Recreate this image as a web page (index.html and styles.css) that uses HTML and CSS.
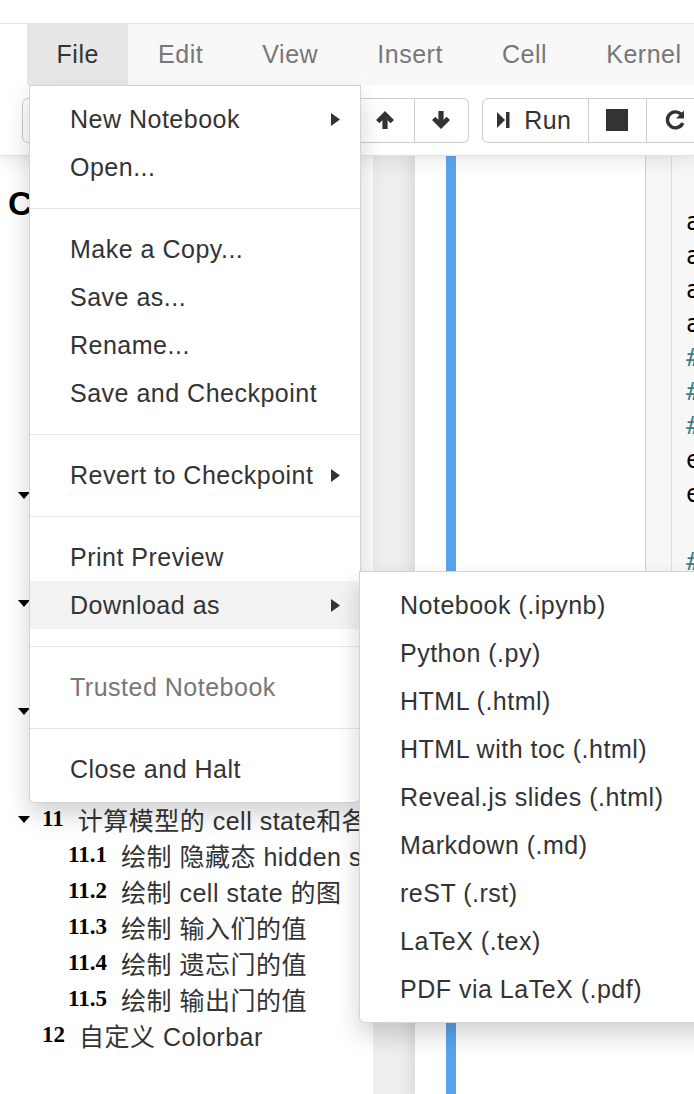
FILE: index.html
```html
<!DOCTYPE html>
<html lang="zh">
<head>
<meta charset="utf-8">
<title>Notebook</title>
<link rel="stylesheet" href="styles.css">
</head>
<body>
<header class="header">
  <div class="topbar"></div>
  <ul class="menubar">
    <li class="menu-item open">File
      <ul class="dropdown">
        <li class="dd-item"><span class="label">New Notebook</span><svg class="caret" viewBox="0 0 9 13" width="9" height="13"><path d="M0 0 L9 6.5 L0 13 Z"/></svg></li>
        <li class="dd-item"><span class="label">Open...</span></li>
        <li class="divider"></li>
        <li class="dd-item"><span class="label">Make a Copy...</span></li>
        <li class="dd-item"><span class="label">Save as...</span></li>
        <li class="dd-item"><span class="label">Rename...</span></li>
        <li class="dd-item"><span class="label">Save and Checkpoint</span></li>
        <li class="divider"></li>
        <li class="dd-item"><span class="label">Revert to Checkpoint</span><svg class="caret" viewBox="0 0 9 13" width="9" height="13"><path d="M0 0 L9 6.5 L0 13 Z"/></svg></li>
        <li class="divider"></li>
        <li class="dd-item"><span class="label">Print Preview</span></li>
        <li class="dd-item active"><span class="label">Download as</span><svg class="caret" viewBox="0 0 9 13" width="9" height="13"><path d="M0 0 L9 6.5 L0 13 Z"/></svg>
          <ul class="dropdown submenu">
            <li class="dd-item"><span class="label">Notebook (.ipynb)</span></li>
            <li class="dd-item"><span class="label">Python (.py)</span></li>
            <li class="dd-item"><span class="label">HTML (.html)</span></li>
            <li class="dd-item"><span class="label">HTML with toc (.html)</span></li>
            <li class="dd-item"><span class="label">Reveal.js slides (.html)</span></li>
            <li class="dd-item"><span class="label">Markdown (.md)</span></li>
            <li class="dd-item"><span class="label">reST (.rst)</span></li>
            <li class="dd-item"><span class="label">LaTeX (.tex)</span></li>
            <li class="dd-item"><span class="label">PDF via LaTeX (.pdf)</span></li>
          </ul>
        </li>
        <li class="divider"></li>
        <li class="dd-item disabled"><span class="label">Trusted Notebook</span></li>
        <li class="divider"></li>
        <li class="dd-item"><span class="label">Close and Halt</span></li>
      </ul>
    </li>
    <li class="menu-item">Edit</li>
    <li class="menu-item">View</li>
    <li class="menu-item">Insert</li>
    <li class="menu-item">Cell</li>
    <li class="menu-item">Kernel</li>
  </ul>
  <div class="toolbar">
    <div class="btn-group"><button class="btn">💾</button></div>
    <div class="btn-group"><button class="btn">+</button></div>
    <div class="btn-group"><button class="btn wide">✂</button><button class="btn wide">⧉</button><button class="btn wide">📋</button></div>
    <div class="btn-group">
      <button class="btn up"><svg viewBox="0 0 20 20" width="20" height="20"><path d="M10 1 L19 10 L15.6 13.2 L12.6 10.2 V19 H7.4 V10.2 L4.4 13.2 L1 10 Z"/></svg></button>
      <button class="btn"><svg viewBox="0 0 20 20" width="20" height="20"><path d="M10 19 L19 10 L15.6 6.8 L12.6 9.8 V1 H7.4 V9.8 L4.4 6.8 L1 10 Z"/></svg></button>
    </div>
    <div class="btn-group">
      <button class="btn run"><svg viewBox="0 0 13 20" width="13" height="20"><path d="M0 2 L8 10 L0 18 Z"/><rect x="9" y="2" width="3.5" height="16"/></svg><span>Run</span></button>
      <button class="btn stop"><svg viewBox="0 0 22 22" width="22" height="22"><rect x="0" y="0" width="22" height="22"/></svg></button>
      <button class="btn restart"><svg viewBox="0 0 24 24" width="24" height="24"><path d="M18.2 6.3 A8 8 0 1 0 19.8 15" fill="none" stroke="#333" stroke-width="3.4"/><path d="M21 2.5 V10.5 H13 Z"/></svg></button>
    </div>
  </div>
</header>

<div class="main">
  <aside class="toc">
    <div class="toc-heading">Contents</div>
    <ul class="toc-list">
      <li class="toc-row lvl1 plain"><span class="num">1</span><span class="title">导入库</span></li>
      <li class="toc-row lvl1 plain"><span class="num">2</span><span class="title">加载数据</span></li>
      <li class="toc-row lvl1 plain"><span class="num">3</span><span class="title">数据预处理</span></li>
      <li class="toc-row lvl1 plain"><span class="num">4</span><span class="title">构建模型</span></li>
      <li class="toc-row lvl1 plain"><span class="num">5</span><span class="title">训练模型</span></li>
      <li class="toc-row lvl1 plain"><span class="num">6</span><span class="title">保存模型</span></li>
      <li class="toc-row lvl1 plain"><span class="num">7</span><span class="title">加载模型</span></li>
      <li class="toc-row lvl1"><span class="toggle"><svg viewBox="0 0 12 7" width="12" height="7"><path d="M0 0 H12 L6 7 Z"/></svg></span><span class="num">8</span><span class="title">获取输出</span></li>
      <li class="toc-row lvl2"><span class="num">8.1</span><span class="title">隐藏态</span></li>
      <li class="toc-row lvl2"><span class="num">8.2</span><span class="title">门的值</span></li>
      <li class="toc-row lvl1"><span class="toggle"><svg viewBox="0 0 12 7" width="12" height="7"><path d="M0 0 H12 L6 7 Z"/></svg></span><span class="num">9</span><span class="title">可视化</span></li>
      <li class="toc-row lvl2"><span class="num">9.1</span><span class="title">绘制图</span></li>
      <li class="toc-row lvl2"><span class="num">9.2</span><span class="title">绘制值</span></li>
      <li class="toc-row lvl1"><span class="toggle"><svg viewBox="0 0 12 7" width="12" height="7"><path d="M0 0 H12 L6 7 Z"/></svg></span><span class="num">10</span><span class="title">分析</span></li>
      <li class="toc-row lvl2"><span class="num">10.1</span><span class="title">绘制图</span></li>
      <li class="toc-row lvl2"><span class="num">10.2</span><span class="title">绘制值</span></li>
      <li class="toc-row lvl1"><span class="toggle"><svg viewBox="0 0 12 7" width="12" height="7"><path d="M0 0 H12 L6 7 Z"/></svg></span><span class="num">11</span><span class="title">计算模型的 cell state和各个门的值</span></li>
      <li class="toc-row lvl2"><span class="num">11.1</span><span class="title">绘制 隐藏态 hidden state 的图</span></li>
      <li class="toc-row lvl2"><span class="num">11.2</span><span class="title">绘制 cell state 的图</span></li>
      <li class="toc-row lvl2"><span class="num">11.3</span><span class="title">绘制 输入们的值</span></li>
      <li class="toc-row lvl2"><span class="num">11.4</span><span class="title">绘制 遗忘门的值</span></li>
      <li class="toc-row lvl2"><span class="num">11.5</span><span class="title">绘制 输出门的值</span></li>
      <li class="toc-row lvl1 plain"><span class="num">12</span><span class="title">自定义 Colorbar</span></li>
    </ul>
  </aside>
  <div class="notebook">
    <div class="cell">
      <div class="prompt"></div>
      <div class="input">
        <div class="linenos"></div>
<pre class="code">ax = plt.subplot(111)
ax.set_xticks([])
ax.set_yticks([])
ax.imshow(h_state)
<span class="cm"># 绘制隐藏态</span>
<span class="cm"># 设置标题</span>
<span class="cm"># 显示图像</span>
extent = ax.get_xlim()
end = len(seq)

<span class="cm"># 保存图像</span>
fig.savefig(path)
plt.show()</pre>
      </div>
    </div>
  </div>
</div>
</body>
</html>
```

FILE: styles.css
```css
* { box-sizing: border-box; }
html, body { margin: 0; padding: 0; }
body {
  width: 694px;
  height: 1094px;
  overflow: hidden;
  position: relative;
  background: #eee;
  color: #333;
  font-family: "Liberation Sans", Arial, "Noto Sans CJK SC", sans-serif;
}
ul { list-style: none; margin: 0; padding: 0; }

/* header */
.header {
  position: relative;
  z-index: 5;
  height: 156px;
  background: #fff;
  border-bottom: 1px solid #e2e2e2;
  box-shadow: 0 0 20px 2px rgba(87, 87, 87, .18);
}
.topbar { height: 24px; border-bottom: 1px solid #e7e7e7; }
.menubar {
  display: flex;
  height: 61px;
  margin-left: 27px;
  background: #f8f8f8;
}
.menu-item {
  position: relative;
  padding: 0 29.6px;
  line-height: 61px;
  font-size: 25px;
  letter-spacing: 0.5px;
  color: #777;
  white-space: nowrap;
}
.menu-item.open { background: #e7e7e7; color: #333; }

.toolbar {
  height: 70px;
  display: flex;
  align-items: center;
  gap: 13px;
  padding-left: 22px;
}
.btn-group { display: flex; }
.btn {
  height: 45px;
  min-width: 55px;
  margin: 0 0 0 -1px;
  padding: 0 12px;
  border: 1px solid #ccc;
  background: #fff;
  color: #333;
  font-family: inherit;
  font-size: 25px;
  letter-spacing: 0.5px;
  display: flex;
  align-items: center;
  justify-content: center;
}
.btn.wide { min-width: 61px; }
.btn.up { min-width: 60px; }
.btn svg { fill: #333; display: block; }
.btn-group .btn:first-child { margin-left: 0; border-radius: 6px 0 0 6px; }
.btn-group .btn:last-child { border-radius: 0 6px 6px 0; }
.btn-group .btn:only-child { border-radius: 6px; }
.btn.run { width: 107px; padding: 0 16px 0 14px; justify-content: space-between; }
.btn.stop { width: 59px; }
.btn.restart { width: 59px; }

/* dropdowns */
.dropdown {
  position: absolute;
  top: 100%;
  left: 2px;
  width: 332px;
  padding: 9px 0;
  background: #fff;
  border: 1px solid rgba(0, 0, 0, .17);
  border-radius: 0 0 6px 6px;
  box-shadow: 0 12px 24px rgba(0, 0, 0, .175);
  z-index: 10;
  line-height: normal;
}
.dd-item {
  position: relative;
  height: 48px;
  display: flex;
  align-items: center;
  padding: 0 20px 0 40px;
  font-size: 25px;
  letter-spacing: 0.5px;
  color: #333;
  white-space: nowrap;
}
.dd-item .label { flex: 1; }
.dd-item .caret { fill: #333; flex: none; }
.dd-item.active { background: #f3f3f3; }
.dd-item.disabled { color: #777; }
.divider { height: 1px; margin: 17px 0 16px; background: #e5e5e5; }
.submenu {
  top: -10px;
  left: 100%;
  margin-left: -1px;
  width: 380px;
  border-radius: 0 6px 6px 6px;
}

/* main */
.main { display: flex; height: 938px; }
.toc {
  width: 373px;
  flex: none;
  background: #fff;
  padding-top: 27px;
  overflow: hidden;
}
.toc-heading {
  margin: 0 0 2px 8px;
  font-size: 34px;
  line-height: 40px;
  font-weight: bold;
  color: #000;
}
.toc-row {
  height: 36px;
  display: flex;
  align-items: center;
  white-space: nowrap;
  font-size: 25px;
  color: #333;
}
.toc-row.lvl1 { padding-left: 18px; }
.toc-row.lvl1.plain { padding-left: 42px; }
.toc-row.lvl2 { padding-left: 68px; }
.toggle { width: 24px; flex: none; display: flex; align-items: center; }
.toggle svg { fill: #000; display: block; }
.num {
  font-family: "Liberation Serif", "DejaVu Serif", serif;
  font-weight: bold;
  font-size: 23px;
  color: #000;
  margin-right: 14px;
}
.title {
  font-family: "Liberation Sans", "Noto Sans CJK SC", sans-serif;
  letter-spacing: 0.5px;
}

.notebook {
  flex: 1;
  margin-left: 42px;
  padding-left: 31px;
  background: #fff;
  box-shadow: 0 0 14px 1px rgba(87, 87, 87, .22);
  display: flex;
  overflow: hidden;
}
.cell {
  flex: 1;
  display: flex;
  align-items: flex-start;
  border-left: 10px solid #5aa3ef;
}
.prompt { width: 189px; flex: none; }
.input {
  flex: 1;
  height: 740px;
  display: flex;
  background: #f7f7f7;
  border-left: 1px solid #cfcfcf;
  border-bottom: 1px solid #cfcfcf;
}
.linenos { width: 26px; flex: none; border-right: 1px solid #ddd; }
.code {
  margin: 0;
  padding: 49px 0 0 14px;
  font-family: "DejaVu Sans Mono", "Liberation Mono", monospace;
  font-size: 24px;
  line-height: 34px;
  color: #000;
  white-space: pre;
}
.code .cm { color: #408080; font-style: italic; }
```
